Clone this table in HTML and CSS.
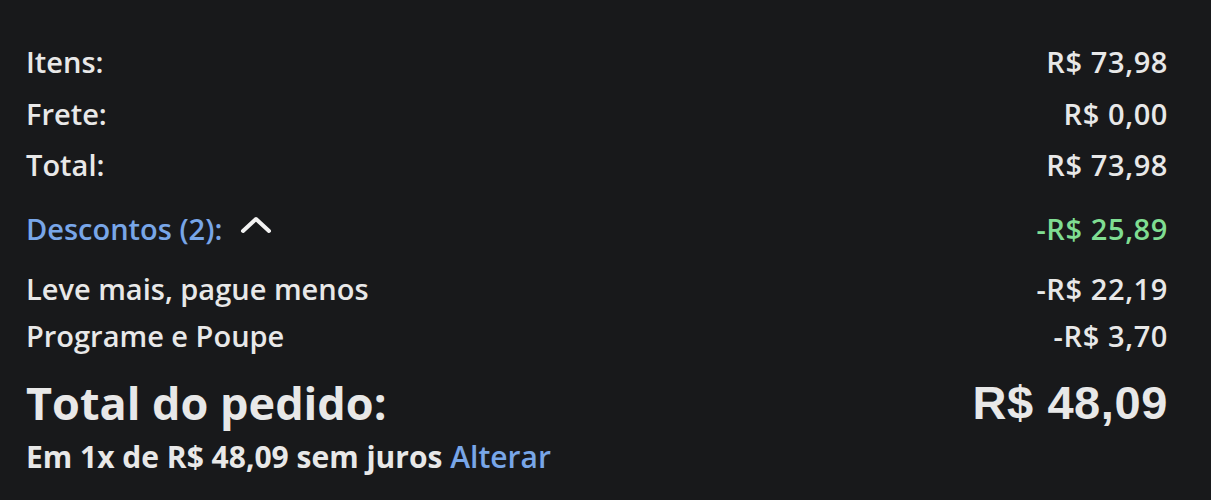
FILE: index.html
```html
<!DOCTYPE html>
<html lang="pt-BR">
<head>
<meta charset="utf-8">
<link rel="stylesheet" href="styles.css">
</head>
<body>
<div class="summary">
  <div class="row basic"><span>Itens:</span><span>R$ 73,98</span></div>
  <div class="row basic"><span>Frete:</span><span>R$ 0,00</span></div>
  <div class="row basic"><span>Total:</span><span>R$ 73,98</span></div>
  <div class="row discounts">
    <span class="disc-label"><span class="link">Descontos (2):</span>
      <svg class="chev" width="32" height="18" viewBox="0 0 32 18"><path d="M3 15 L16 3 L29 15" fill="none" stroke="#f2f2f2" stroke-width="4" stroke-linecap="round" stroke-linejoin="round"/></svg>
    </span>
    <span class="green">-R$ 25,89</span>
  </div>
  <div class="row sub first"><span>Leve mais, pague menos</span><span>-R$ 22,19</span></div>
  <div class="row sub"><span>Programe e Poupe</span><span>-R$ 3,70</span></div>
  <div class="row grand"><span>Total do pedido:</span><span class="grand-val">R$ 48,09</span></div>
  <div class="install">Em 1x de R$ 48,09 sem juros <span class="link plain">Alterar</span></div>
</div>
</body>
</html>
```
FILE: styles.css
```css
html, body {
  margin: 0;
  padding: 0;
  background: #18191b;
}
body {
  width: 1211px;
  height: 500px;
  overflow: hidden;
  font-family: "Open Sans", "Noto Sans", sans-serif;
  color: #e8e8e8;
}
.summary {
  padding: 36px 43px 0 26px;
  display: flex;
  flex-direction: column;
}
.row {
  display: flex;
  justify-content: space-between;
  align-items: center;
  font-size: 29px;
  font-weight: 600;
  line-height: 1;
}
.row > span:last-child {
  letter-spacing: 0.6px;
}
.basic {
  height: 51.5px;
}
.discounts {
  margin-top: 12px;
  height: 51px;
}
.disc-label {
  display: flex;
  align-items: center;
  gap: 18px;
}
.chev {
  margin-top: -6px;
}
.link {
  color: #78a6e8;
}
.green {
  color: #7fdd92;
}
.sub {
  height: 47px;
}
.sub.first {
  margin-top: 11px;
}
.grand {
  margin-top: 13px;
  height: 62px;
  font-size: 45px;
  font-weight: 700;
}
.grand .grand-val {
  font-family: "Liberation Sans", Arial, sans-serif;
  font-size: 47px;
  letter-spacing: 0;
}
.install {
  margin-top: 8px;
  font-size: 30px;
  font-weight: 700;
  line-height: 1;
}
.plain {
  font-weight: 600;
}
```
